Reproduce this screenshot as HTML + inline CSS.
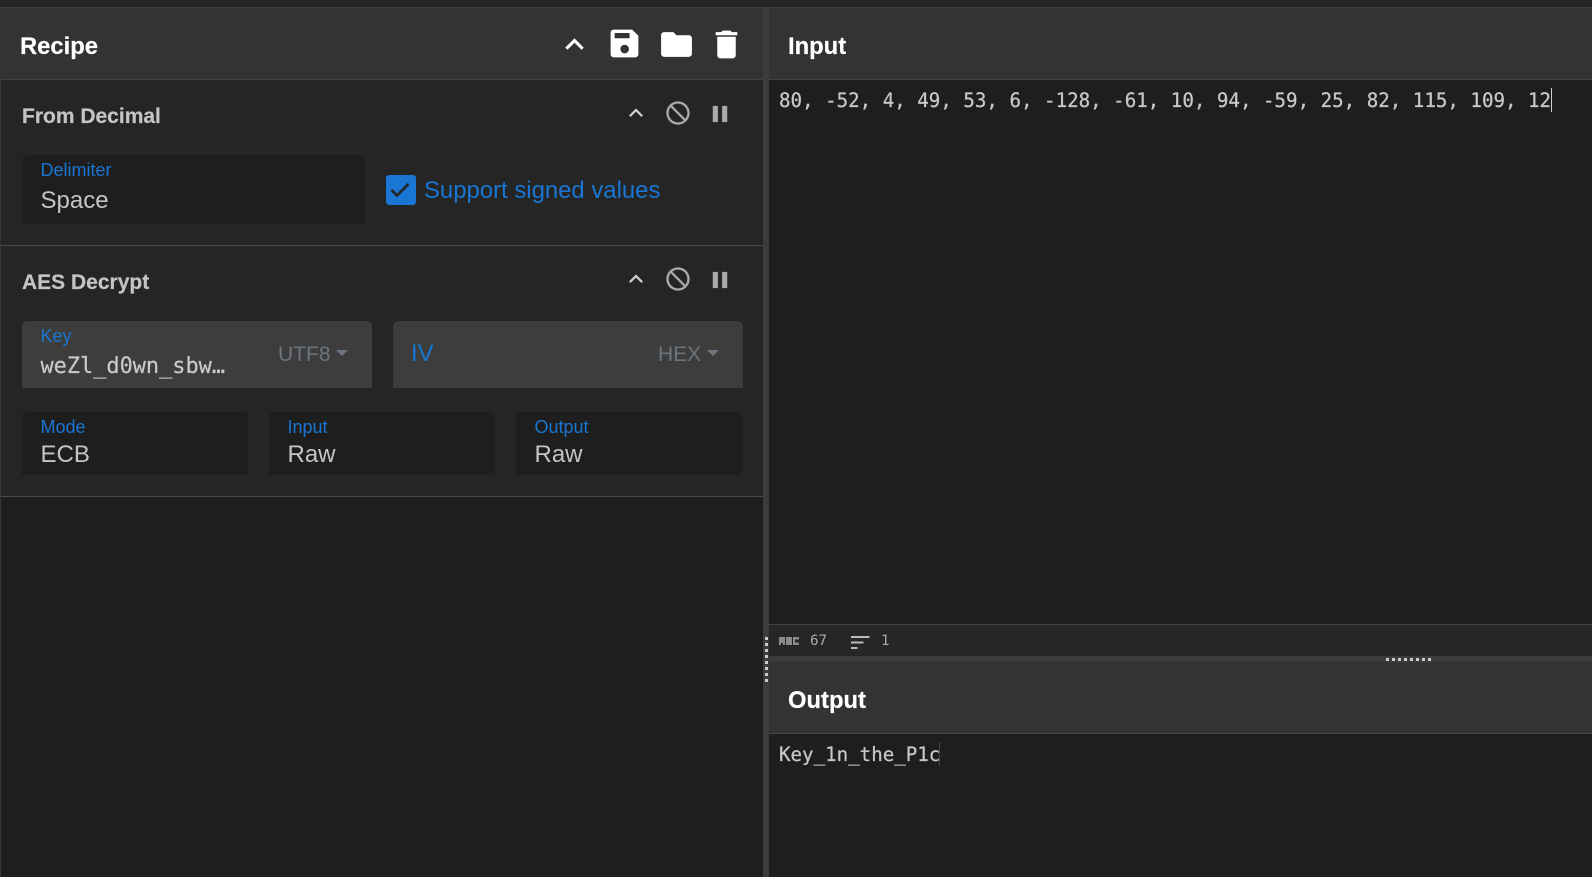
<!DOCTYPE html>
<html><head><meta charset="utf-8"><style>
html,body{margin:0;padding:0;width:1592px;height:877px;overflow:hidden;background:#1e1e1e;font-family:"Liberation Sans",sans-serif}
div,span,svg{position:absolute;white-space:nowrap;box-sizing:border-box}
.h{background:#333;border-bottom:1px solid #444}
.t{color:#fff;font-weight:bold;font-size:23.8px;line-height:28px;-webkit-text-stroke:.2px #fff}
.st{color:#c4c4c4;font-weight:bold;font-size:21px;line-height:26px;left:22px;-webkit-text-stroke:.2px #c4c4c4}
.sec{left:1px;width:762px;background:#252525;border-bottom:1px solid #4a4a4a}
.box{background:#1e1e1e;border-radius:5px 5px 0 0}
.kb{background:#3d3d3d;border-radius:5px 5px 2px 2px}
.l{color:#1976d2;font-size:18px;line-height:22px}
.v{color:#c4c4c4;font-size:24px;line-height:30px}
.m{font-family:"DejaVu Sans Mono","Liberation Mono",monospace;color:#c8c8c8;-webkit-text-stroke:.25px #c8c8c8}
.d{color:#6c757d;font-size:21px;line-height:26px}
.c{width:0;height:0;border-left:6px solid transparent;border-right:6px solid transparent;border-top:6px solid #6c757d}
.flip{transform:scaleX(-1)}
</style></head><body>
<div style="left:0;top:0;width:1592px;height:8px;background:#252525;border-bottom:1px solid #3e3e3e"></div>
<div style="left:0;top:8px;width:1px;height:869px;background:#363636"></div>
<div style="left:763px;top:8px;width:6px;height:869px;background:#3c3c3c"></div>

<div class="h" style="left:1px;top:8px;width:762px;height:72px"></div>
<div class="t" style="left:20px;top:32.5px">Recipe</div>
<svg style="left:555.6px;top:25.7px" width="37" height="37" viewBox="0 0 24 24" fill="#fff"><path d="M7.41 15.41L12 10.83l4.59 4.58L18 14l-6-6-6 6z"/></svg>
<svg style="left:606.4px;top:25.4px" width="37" height="37" viewBox="0 0 24 24" fill="#fff"><path fill-rule="evenodd" d="M17 3H5c-1.11 0-2 .9-2 2v14c0 1.100.89 2 2 2h14c1.100 0 2-.9 2-2V7l-4-4zM12.100 12.800a2.800 2.800 0 1 0 0 5.600a2.800 2.800 0 1 0 0-5.600zM5.600 5.200h9.700v3.400H5.600z"/></svg>
<svg style="left:657.5px;top:25.8px" width="37" height="37" viewBox="0 0 24 24" fill="#fff"><path d="M10 4H4c-1.100 0-1.990.9-1.990 2L2 18c0 1.100.9 2 2 2h16c1.100 0 2-.9 2-2V8c0-1.100-.9-2-2-2h-8l-2-2z"/></svg>
<svg style="left:708.3px;top:25.6px" width="37" height="37" viewBox="0 0 24 24" fill="#fff"><path d="M6 19c0 1.100.9 2 2 2h8c1.100 0 2-.9 2-2V7H6v12zM19 4h-3.500l-1-1h-5l-1 1H5v2h14V4z"/></svg>

<div class="sec" style="top:80px;height:166px"></div>
<div class="st" style="top:103.5px">From Decimal</div>
<svg style="left:622px;top:99.4px" width="28" height="28" viewBox="0 0 24 24" fill="#ccc"><path d="M7.41 15.41L12 10.83l4.59 4.58L18 14l-6-6-6 6z"/></svg>
<svg class="flip" style="left:664px;top:99px" width="28" height="28" viewBox="0 0 24 24" fill="#aaa"><path d="M12 2C6.480 2 2 6.480 2 12s4.480 10 10 10 10-4.480 10-10S17.520 2 12 2zM4 12c0-4.420 3.580-8 8-8 1.850 0 3.550.63 4.900 1.690L5.690 16.900C4.630 15.550 4 13.850 4 12zm8 8c-1.850 0-3.550-.63-4.900-1.690L18.310 7.100C19.370 8.450 20 10.150 20 12c0 4.420-3.580 8-8 8z"/></svg>
<svg style="left:706px;top:99.5px" width="28" height="28" viewBox="0 0 24 24" fill="#aaa"><path d="M5.800 19h4.400V5H5.800v14zm8-14v14h4.400V5h-4.400z"/></svg>
<div class="box" style="left:22px;top:155px;width:343px;height:69px"></div>
<div class="l" style="left:40.5px;top:159px">Delimiter</div>
<div class="v" style="left:40.5px;top:186px">Space</div>
<div style="left:386px;top:175px;width:30px;height:30px;background:#1976d2;border-radius:3px"></div>
<svg style="left:386px;top:175px" width="30" height="30" viewBox="0 0 30 30" fill="none" stroke="#252525" stroke-width="2.7"><path d="M5.500 15l5.500 5.500L22.500 9"/></svg>
<div style="left:424px;top:176px;color:#1976d2;font-size:23.9px;line-height:30px">Support signed values</div>

<div class="sec" style="top:246px;height:251px"></div>
<div class="st" style="top:269.5px">AES Decrypt</div>
<svg style="left:622px;top:265.4px" width="28" height="28" viewBox="0 0 24 24" fill="#ccc"><path d="M7.41 15.41L12 10.83l4.59 4.58L18 14l-6-6-6 6z"/></svg>
<svg class="flip" style="left:664px;top:265px" width="28" height="28" viewBox="0 0 24 24" fill="#aaa"><path d="M12 2C6.480 2 2 6.480 2 12s4.480 10 10 10 10-4.480 10-10S17.520 2 12 2zM4 12c0-4.420 3.580-8 8-8 1.850 0 3.550.63 4.900 1.690L5.690 16.900C4.630 15.550 4 13.850 4 12zm8 8c-1.850 0-3.550-.63-4.900-1.690L18.310 7.100C19.370 8.450 20 10.150 20 12c0 4.420-3.580 8-8 8z"/></svg>
<svg style="left:706px;top:265.5px" width="28" height="28" viewBox="0 0 24 24" fill="#aaa"><path d="M5.800 19h4.400V5H5.800v14zm8-14v14h4.400V5h-4.400z"/></svg>

<div class="kb" style="left:22px;top:321px;width:350px;height:67px"></div>
<div class="l" style="left:40.5px;top:325px">Key</div>
<div class="m" style="left:40.5px;top:352px;font-size:21.9px;line-height:30px">weZl_d0wn_sbw…</div>
<div class="d" style="left:278px;top:342px">UTF8</div>
<div class="c" style="left:336px;top:350px"></div>

<div class="kb" style="left:393px;top:321px;width:350px;height:67px"></div>
<div style="left:411px;top:338.5px;color:#1976d2;font-size:24px;line-height:30px">IV</div>
<div class="d" style="left:658px;top:342px">HEX</div>
<div class="c" style="left:707px;top:350px"></div>

<div class="box" style="left:22px;top:412px;width:226px;height:63px"></div>
<div class="l" style="left:40.5px;top:416px">Mode</div>
<div class="v" style="left:40.5px;top:439.5px">ECB</div>
<div class="box" style="left:269px;top:412px;width:226px;height:63px"></div>
<div class="l" style="left:287.5px;top:416px">Input</div>
<div class="v" style="left:287.5px;top:439.5px">Raw</div>
<div class="box" style="left:516px;top:412px;width:226px;height:63px"></div>
<div class="l" style="left:534.5px;top:416px">Output</div>
<div class="v" style="left:534.5px;top:439.5px">Raw</div>

<div class="h" style="left:769px;top:8px;width:823px;height:72px"></div>
<div class="t" style="left:788px;top:32.5px">Input</div>
<div class="m" style="left:779px;top:87px;font-size:19.15px;line-height:27px">80, -52, 4, 49, 53, 6, -128, -61, 10, 94, -59, 25, 82, 115, 109, 12</div>
<div style="left:1551px;top:88px;width:1px;height:24px;background:#ccc"></div>

<div style="left:769px;top:624px;width:823px;height:32px;background:#262626;border-top:1px solid #444"></div>
<svg style="left:779px;top:637px" width="20" height="8" viewBox="0 0 20 8" fill="#8a8a8a"><path d="M0 0h6v8H4V6H2v2H0zM7 0h6v8H7zM14 0h6v2.500h-4v3h4V8h-6z"/></svg>
<div class="m" style="left:810px;top:632px;font-size:14.2px;line-height:18px;color:#aaa;-webkit-text-stroke:0">67</div>
<svg style="left:851px;top:636px" width="19" height="14" viewBox="0 0 19 14" fill="#bbb"><path d="M0 0h18.500v2H0zM0 5.500h12.500v2H0zM0 11h6.500v2H0z"/></svg>
<div class="m" style="left:881px;top:632px;font-size:14.2px;line-height:18px;color:#aaa;-webkit-text-stroke:0">1</div>

<div style="left:769px;top:656px;width:823px;height:6px;background:#3c3c3c"></div>
<div class="h" style="left:769px;top:662px;width:823px;height:72px"></div>
<div class="t" style="left:788px;top:687px">Output</div>
<div class="m" style="left:779px;top:741px;font-size:19.15px;line-height:27px">Key_1n_the_P1c</div>
<div style="left:939px;top:742px;width:1px;height:24px;background:#444"></div>

<svg style="left:1386px;top:658px" width="46" height="4" viewBox="0 0 46 4" fill="#ccc"><path d="M0 0h3v3H0zM6 0h3v3H6zM12 0h3v3h-3zM18 0h3v3h-3zM24 0h3v3h-3zM30 0h3v3h-3zM36 0h3v3h-3zM42 0h3v3h-3z"/></svg>
<svg style="left:765px;top:637px" width="4" height="46" viewBox="0 0 4 46" fill="#ccc"><path d="M0 0h3v3H0zM0 6h3v3H0zM0 12h3v3H0zM0 18h3v3H0zM0 24h3v3H0zM0 30h3v3H0zM0 36h3v3H0zM0 42h3v3H0z"/></svg>
</body></html>
